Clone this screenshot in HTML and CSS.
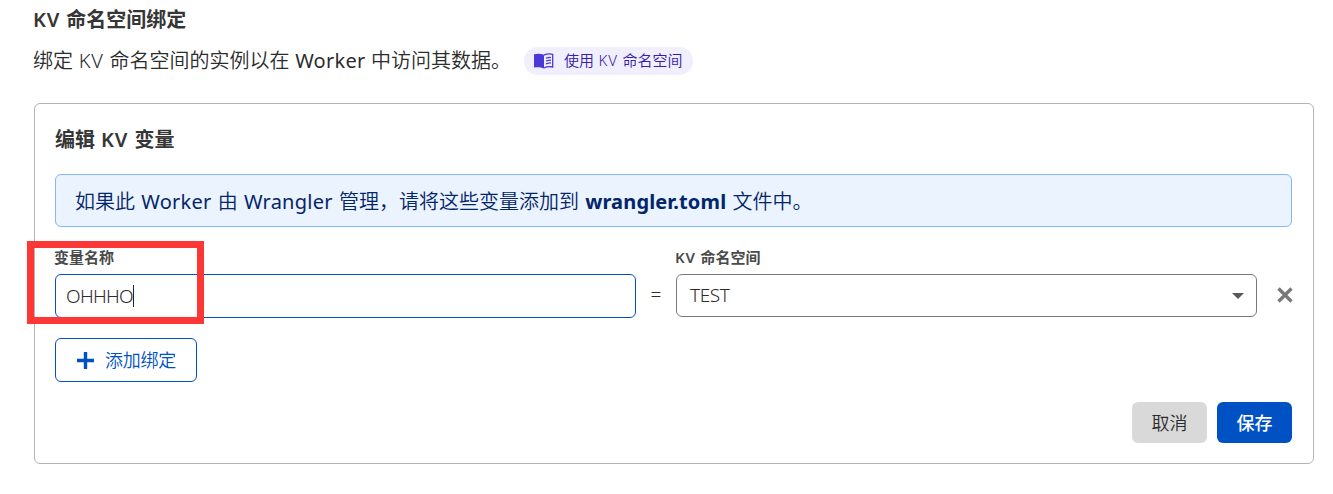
FILE: index.html
```html
<!DOCTYPE html>
<html lang="zh-CN">
<head>
<meta charset="utf-8">
<title>KV 命名空间绑定</title>
<link rel="stylesheet" href="styles.css">
</head>
<body>
<main class="page">
  <h2 class="title"><span class="kv">KV</span> 命名空间绑定</h2>
  <div class="intro">
    <p class="desc">绑定 <span class="kv">KV</span> 命名空间的实例以在 <span class="latin">Worker</span> 中访问其数据。</p>
    <a class="pill">
      <svg class="book" width="20" height="16" viewBox="0 0 20 16"><path fill="currentColor" d="M0 1.200C3.500.4 7.200.5 10 1.700V15.600C7 14.200 3.500 13.900 0 14.500Z"/><path fill="none" stroke="currentColor" stroke-width="1.300" d="M10 2.200C12.500.9 16 .7 18.700 1.300V14C16 13.400 12.500 13.600 10 15M12 5.200Q14.200 4.300 17 4.300M12 8Q14.200 7.100 17 7.100M12 10.800Q14.200 9.900 17 9.900"/></svg>
      <span class="pill-text">使用 <span class="kv">KV</span> 命名空间</span>
    </a>
  </div>
  <section class="card">
    <h3 class="card-title">编辑 <span class="kv">KV</span> 变量</h3>
    <div class="notice"><span class="notice-text">如果此 <span class="latin">Worker</span> 由 <span class="latin">Wrangler</span> 管理，请将这些变量添加到 <b>wrangler.toml</b> 文件中。</span></div>
    <div class="row">
      <div class="field">
        <span class="label">变量名称</span>
        <div class="input"><span class="value">OHHHO</span><i class="caret"></i></div>
        <div class="marker"></div>
      </div>
      <span class="equals">=</span>
      <div class="field">
        <span class="label"><span class="kv">KV</span> 命名空间</span>
        <div class="select"><span class="value">TEST</span><svg width="12" height="6" viewBox="0 0 12 6"><path fill="#595959" d="M0 0H12L6 6Z"/></svg></div>
      </div>
      <svg class="remove" width="16" height="16" viewBox="0 0 16 16"><path fill="none" stroke="#797979" stroke-width="3.400" d="M1.500 1.500 14.500 14.500M14.500 1.500 1.500 14.500"/></svg>
    </div>
    <button class="btn add"><svg width="17" height="17" viewBox="0 0 17 17"><path fill="none" stroke="currentColor" stroke-width="3.400" d="M8.500 0V17M0 8.500H17"/></svg><span>添加绑定</span></button>
    <div class="actions">
      <button class="btn cancel">取消</button>
      <button class="btn save">保存</button>
    </div>
  </section>
</main>
</body>
</html>
```
FILE: styles.css
```css
* { box-sizing: border-box; }
body {
  margin: 0;
  background: #fff;
  color: #2c2c2c;
  font-family: "Noto Sans", "Noto Sans CJK SC", sans-serif;
  font-size: 20px;
  font-weight: 350;
}
.page { padding: 5px 19px 0 34px; }
.kv { letter-spacing: 0.8px; }
.title, .card-title { margin: 0; font-size: 20px; line-height: 30px; font-weight: 600; white-space: nowrap; word-spacing: 0.9px; }
.title { text-indent: -1px; }
.title, .card-title { color: #363636; }
.intro { display: flex; align-items: center; height: 28px; margin-top: 12px; }
.desc { margin: 0; width: 490px; line-height: 28px; white-space: nowrap; word-spacing: 0.5px; text-indent: -1px; }
.latin { font-weight: 400; letter-spacing: 0.25px; }
.pill { display: flex; align-items: center; width: 169px; height: 28px; padding-left: 10px; gap: 10px; border-radius: 14px; background: #f1effd; color: #4b38d9; font-size: 15px; white-space: nowrap; }
.pill-text { color: #3520a8; line-height: 26px; padding-bottom: 2px; word-spacing: 0.7px; }
.book { flex: none; }
.card { height: 361px; margin-top: 28px; padding: 20px 21px 0 20px; border: 1px solid #b4b4b4; border-radius: 6px; }
.card-title { padding-top: 1px; height: 30px; }
.notice { display: flex; align-items: center; height: 53px; margin-top: 20px; padding-left: 19px; border: 1px solid #82b6ff; border-radius: 6px; background: #ebf3ff; color: #03256a; white-space: nowrap; word-spacing: 1px; }
.notice-text { padding-bottom: 1px; }
.notice b { font-weight: 700; letter-spacing: 0.15px; }
.row { display: flex; margin-top: 20px; }
.field { position: relative; flex: none; width: 581px; }
.label { display: block; height: 27px; line-height: 20px; color: #4a4a4a; font-size: 15px; font-weight: 600; white-space: nowrap; word-spacing: 0.7px; text-indent: -1px; }
.input, .select { display: flex; align-items: center; border: 1px solid #0051c3; border-radius: 6px; font-size: 19px; }
.input { height: 44px; padding-left: 10px; }
.input .value { letter-spacing: -0.7px; }
.select { height: 43px; padding: 0 12px 0 13px; justify-content: space-between; border-color: #797979; }
.select .value { padding-bottom: 1px; letter-spacing: -0.4px; }
.caret { width: 1px; height: 22px; background: #222; }
.marker { position: absolute; left: -28px; top: -6px; width: 177px; height: 83px; border: 7px solid #fd3736; }
.equals { flex: none; width: 40px; padding-top: 27px; line-height: 41px; text-align: center; font-size: 19px; }
.remove { flex: none; margin: 40px 0 0 20px; }
.btn { display: flex; align-items: center; justify-content: center; margin: 0; padding: 0; border: 0; border-radius: 6px; font-family: inherit; font-size: 18px; font-weight: 350; line-height: 26px; }
.add { width: 142px; height: 44px; margin-top: 20px; padding-left: 1px; gap: 11px; border: 1px solid #0051c3; background: #fff; color: #0051c3; }
.add span { letter-spacing: -0.2px; }
.actions { display: flex; justify-content: flex-end; gap: 10px; margin-top: 20px; }
.cancel, .save { width: 75px; height: 41px; }
.cancel { background: #d9d9d9; color: #2c2c2c; }
.save { background: #0051c3; color: #fff; font-weight: 500; }
.equals { margin-right: 0; }
.equals + .field { margin-left: 0; }
```
